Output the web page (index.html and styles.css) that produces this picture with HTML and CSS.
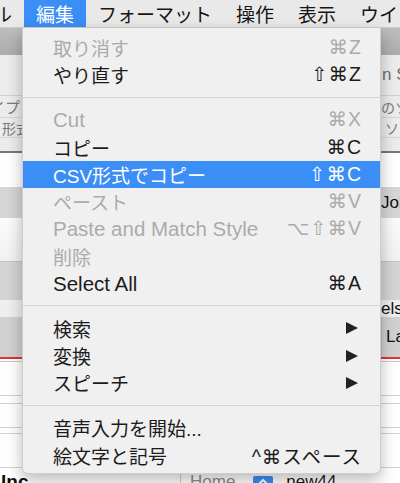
FILE: index.html
```html
<!DOCTYPE html>
<html lang="ja">
<head>
<meta charset="utf-8">
<title>編集メニュー</title>
<link rel="stylesheet" href="styles.css">
</head>
<body>
<div class="screen">
  <div class="menubar">
    <span class="mb-item first">ル</span>
    <span class="mb-item active">編集</span>
    <span class="mb-item">フォーマット</span>
    <span class="mb-item">操作</span>
    <span class="mb-item">表示</span>
    <span class="mb-item">ウインドウ</span>
  </div>

  <div class="window">
    <div class="band toolbar"></div>
    <div class="band search"><span class="l"></span><span class="r ph">n S</span></div>
    <div class="band hdr1"><span class="l end">タイプ</span><span class="r small">のソース</span></div>
    <div class="band hdr2"><span class="l small pl2">形式</span><span class="r small pl4">ソース</span></div>
    <div class="band gap"></div>
    <div class="band rule"></div>
    <div class="band white34"></div>
    <div class="band grey1"><span class="l"></span><span class="r">John</span></div>
    <div class="band white44"></div>
    <div class="band grey2"></div>
    <div class="band light"><span class="l"></span><span class="r">els</span></div>
    <div class="band grey3"><span class="l"></span><span class="r col pl4">La</span></div>
    <div class="band red"></div>
    <div class="band r3"></div>
    <div class="band r34"></div>
    <div class="band r8"></div>
    <div class="band r24"></div>
    <div class="band r6"></div>
    <div class="band r34"></div>
    <div class="bottom">
      <div class="cell-name">Inc</div>
      <div class="cell-addr">
        <span class="home">Home</span>
        <span class="stepper"><svg width="12" height="8" viewBox="0 0 12 8"><path d="M1.5 6.5 L6 2 L10.5 6.5" fill="none" stroke="#fff" stroke-width="2"/></svg></span>
        <span class="val">new44</span>
      </div>
    </div>
  </div>

  <div class="menu">
    <div class="item dis"><span class="label">取り消す</span><span class="key">⌘Z</span></div>
    <div class="item"><span class="label">やり直す</span><span class="key">⇧⌘Z</span></div>
    <div class="sep"></div>
    <div class="item dis"><span class="label en">Cut</span><span class="key">⌘X</span></div>
    <div class="item"><span class="label">コピー</span><span class="key">⌘C</span></div>
    <div class="item hl"><span class="label">CSV形式でコピー</span><span class="key">⇧⌘C</span></div>
    <div class="item dis"><span class="label">ペースト</span><span class="key">⌘V</span></div>
    <div class="item dis"><span class="label en">Paste and Match Style</span><span class="key">⌥⇧⌘V</span></div>
    <div class="item dis"><span class="label">削除</span></div>
    <div class="item"><span class="label en">Select All</span><span class="key">⌘A</span></div>
    <div class="sep"></div>
    <div class="item"><span class="label">検索</span><svg class="arrow" width="12" height="12" viewBox="0 0 12 12"><path d="M0 0 L12 6 L0 12 Z" fill="#222"/></svg></div>
    <div class="item"><span class="label">変換</span><svg class="arrow" width="12" height="12" viewBox="0 0 12 12"><path d="M0 0 L12 6 L0 12 Z" fill="#222"/></svg></div>
    <div class="item"><span class="label">スピーチ</span><svg class="arrow" width="12" height="12" viewBox="0 0 12 12"><path d="M0 0 L12 6 L0 12 Z" fill="#222"/></svg></div>
    <div class="sep"></div>
    <div class="item"><span class="label">音声入力を開始...</span></div>
    <div class="item"><span class="label">絵文字と記号</span><span class="key">^⌘スペース</span></div>
  </div>
</div>
</body>
</html>
```

FILE: styles.css
```css
* {
  box-sizing: border-box;
  margin: 0;
  padding: 0;
}

html, body {
  width: 400px;
  height: 483px;
  overflow: hidden;
}

body {
  margin: 0;
  background: #ffffff;
  color: #1b1b1b;
  font-family: "Liberation Sans", "Noto Sans CJK JP", sans-serif;
}

.screen {
  position: relative;
  width: 400px;
  height: 483px;
  overflow: hidden;
}

/* ---------- menu bar ---------- */
.menubar {
  height: 28px;
  display: flex;
  align-items: stretch;
  background: #e9e9e9;
  border-bottom: 1px solid #d0d0d0;
  font-size: 19px;
  white-space: nowrap;
  overflow: hidden;
}

.mb-item {
  display: flex;
  align-items: center;
  padding: 0 12px;
  color: #151515;
  flex: none;
}

.mb-item.first {
  margin-left: -7px;
  padding-left: 0;
}

.mb-item.active {
  background: #3b8ef5;
  color: #ffffff;
}

/* ---------- background window ---------- */
.window {
  display: flex;
  flex-direction: column;
  font-size: 17px;
}

.band {
  display: flex;
  justify-content: space-between;
  align-items: center;
  flex: none;
  white-space: nowrap;
}

.band .l {
  width: 22px;
  overflow: hidden;
  color: #7a7a7a;
}

.band .r {
  width: 19px;
  overflow: hidden;
  color: #111;
}

.band .l.end {
  direction: rtl;
  padding-right: 2px;
  font-size: 15px;
}

.small {
  font-size: 14px;
  color: #7a7a7a !important;
}

.pl2 { padding-left: 2px; }
.pl4 { padding-left: 4px; }

.ph {
  color: #6f6f6f !important;
  padding-left: 1px;
}

.toolbar {
  height: 27px;
  background: linear-gradient(#bdbdbd, #adadad);
}

.search {
  height: 41px;
  background: #ececec;
  border-bottom: 1px solid #d2d2d2;
}

.hdr1 {
  height: 22px;
  background: #ececec;
  border-bottom: 1px solid #d6d6d6;
}

.hdr2 {
  height: 20px;
  background: #ececec;
  border-bottom: 1px solid #d6d6d6;
}

.gap {
  height: 13px;
  background: #ececec;
}

.rule {
  height: 2px;
  background: #777777;
}

.white34 {
  height: 34px;
  background: #ffffff;
}

.grey1 {
  height: 31px;
  background: #d6d6d6;
}

.white44 {
  height: 44px;
  background: linear-gradient(#fbfbfb, #f1f1f1);
  border-bottom: 1px solid #c6c6c6;
}

.grey2 {
  height: 38px;
  background: #d4d4d4;
}

.light {
  height: 17px;
  background: #efefef;
}

.grey3 {
  height: 40px;
  background: #d1d1d1;
}

.col {
  border-left: 1px solid #bdbdbd;
  align-self: stretch;
  display: flex;
  align-items: center;
}

.red {
  height: 2px;
  background: #e5322d;
}

.r3 { height: 3px; border-bottom: 1px solid #c9c9c9; }
.r34 { height: 34px; border-bottom: 1px solid #d2d2d2; }
.r8 { height: 8px; border-bottom: 1px solid #d2d2d2; }
.r24 { height: 24px; border-bottom: 1px solid #d2d2d2; }
.r6 { height: 6px; border-bottom: 1px solid #d2d2d2; }

.bottom {
  display: flex;
  height: 30px;
  flex: none;
}

.cell-name {
  width: 180px;
  padding: 3px 0 0 1px;
  font-weight: bold;
  font-size: 19px;
  color: #111;
}

.cell-addr {
  flex: 1;
  display: flex;
  align-items: flex-start;
  border-left: 1px solid #cfcfcf;
  padding: 4px 0 0 9px;
}

.home {
  color: #8c8c8c;
}

.stepper {
  width: 20px;
  height: 20px;
  margin: 4px 0 0 18px;
  background: #3b8ef5;
  border-radius: 2px;
  display: flex;
  align-items: flex-start;
  justify-content: center;
  padding-top: 2px;
}

.val {
  margin-left: 13px;
  color: #1a1a1a;
}

/* ---------- dropdown menu ---------- */
.menu {
  position: absolute;
  left: 22px;
  top: 28px;
  width: 359px;
  padding: 6px 0 4px;
  background: #f0f0f0;
  border: 1px solid rgba(0, 0, 0, 0.14);
  border-top: none;
  border-radius: 0 0 6px 6px;
  box-shadow: 0 6px 16px rgba(0, 0, 0, 0.28);
}

.item {
  height: 27.3px;
  display: flex;
  align-items: center;
  justify-content: space-between;
  padding: 0 18px 0 30px;
  font-size: 19px;
  color: #1b1b1b;
  white-space: nowrap;
}

.item .label.en {
  font-size: 20.5px;
}

.key {
  font-family: "Liberation Sans", "DejaVu Sans", "Noto Sans CJK JP", sans-serif;
  font-size: 19.5px;
  letter-spacing: 1px;
}

.item.dis {
  color: #ababab;
}

.item.hl {
  background: #3b8ef5;
  color: #ffffff;
}

.arrow {
  margin-right: 4px;
}

.sep {
  height: 17.5px;
  display: flex;
  align-items: center;
}

.sep::before {
  content: "";
  flex: 1;
  height: 1px;
  background: #d4d4d4;
}
```
